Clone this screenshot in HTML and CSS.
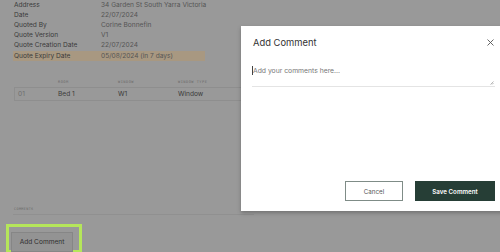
FILE: index.html
```html
<!DOCTYPE html>
<html>
<head>
<meta charset="utf-8">
<link rel="stylesheet" href="styles.css">
</head>
<body>
<div class="page">
  <div class="details">
    <div class="row"><span class="label">Address</span><span class="value">34 Garden St South Yarra Victoria</span></div>
    <div class="row"><span class="label">Date</span><span class="value">22/07/2024</span></div>
    <div class="row"><span class="label">Quoted By</span><span class="value">Corine Bonnefin</span></div>
    <div class="row"><span class="label">Quote Version</span><span class="value">V1</span></div>
    <div class="row"><span class="label">Quote Creation Date</span><span class="value">22/07/2024</span></div>
    <div class="row expiry"><span class="label">Quote Expiry Date</span><span class="value">05/08/2024 (in 7 days)</span></div>
  </div>

  <div class="table">
    <div class="thead">
      <span class="c-idx"></span><span class="c">Room</span><span class="c">Window</span><span class="c">Window Type</span>
    </div>
    <div class="trow">
      <span class="c-idx num">01</span><span class="c">Bed 1</span><span class="c">W1</span><span class="c">Window</span>
    </div>
  </div>

  <div class="comments">
    <div class="comments-label">Comments</div>
    <div class="focus-ring"><button class="add-btn">Add Comment</button></div>
  </div>
</div>

<div class="modal">
  <div class="modal-head">
    <span class="modal-title">Add Comment</span>
    <svg class="close" width="7" height="7" viewBox="0 0 7 7"><path d="M0.5 0.5 L6.5 6.5 M6.5 0.5 L0.5 6.5" stroke="#555" stroke-width="0.9" fill="none"/></svg>
  </div>
  <div class="field">
    <span class="caret"></span><span class="placeholder">Add your comments here...</span>
    <svg class="grip" width="4" height="4" viewBox="0 0 4 4"><path d="M0.5 3.5 L3.5 0.5 M2 3.5 L3.5 2" stroke="#888" stroke-width="0.6"/></svg>
  </div>
  <div class="actions">
    <button class="btn cancel">Cancel</button>
    <button class="btn save">Save Comment</button>
  </div>
</div>
</body>
</html>
```
FILE: styles.css
```css
html, body {
  margin: 0;
  padding: 0;
  width: 500px;
  height: 252px;
  overflow: hidden;
}
body {
  background: #999999;
  font-family: Inter, "Liberation Sans", sans-serif;
  color: #333;
  position: relative;
}
.page {
  padding: 0 0 0 13px;
}
.details {
  display: flex;
  flex-direction: column;
  width: 192px;
}
.row {
  display: flex;
  height: 10px;
  align-items: center;
  font-size: 6.6px;
  padding-left: 1px;
  white-space: nowrap;
}
.row .label {
  width: 87px;
  flex: none;
  color: #3a3a3a;
}
.row .value {
  color: #555;
}
.row.expiry {
  background: #a89881;
  margin-top: 1px;
}
.table {
  margin-top: 15px;
  width: 240px;
  padding-left: 1px;
}
.thead, .trow {
  display: flex;
  align-items: center;
}
.thead {
  height: 11px;
  font-size: 3.6px;
  letter-spacing: 0.5px;
  text-transform: uppercase;
  color: #6a6a6a;
  font-family: "DejaVu Sans Mono", monospace;
}
.trow {
  height: 12px;
  border: 1px solid #8e8e8e;
  font-size: 6.6px;
  color: #3a3a3a;
}
.c-idx {
  width: 40px;
  padding-left: 3px;
}
.thead .c-idx { padding-left: 4px; }
.num { color: #6e6e6e; }
.c {
  width: 60px;
}
.comments {
  margin-top: 106px;
}
.comments-label {
  font-family: "DejaVu Sans Mono", monospace;
  font-size: 3.4px;
  letter-spacing: 0.4px;
  text-transform: uppercase;
  color: #6a6a6a;
  padding-left: 1px;
  height: 7px;
  line-height: 5px;
  width: 240px;
  border-bottom: 1px solid #909090;
}
.focus-ring {
  margin: 9px 0 0 -7px;
  width: 68px;
  height: 22px;
  border: 3px solid #b5e65a;
  padding: 1px 0 0 2px;
}
.add-btn {
  width: 62px;
  height: 20px;
  background: #939393;
  border: 1px solid #868686;
  font-family: Inter, "Liberation Sans", sans-serif;
  font-size: 6.6px;
  color: #2f2f2f;
  padding: 0;
}
.modal {
  position: absolute;
  left: 241px;
  top: 26px;
  width: 243px;
  height: 185px;
  background: #ffffff;
  padding: 0 10px 0 11px;
  box-shadow: 0 2px 4px rgba(0,0,0,0.25);
  display: flex;
  flex-direction: column;
}
.modal-head {
  height: 33px;
  display: flex;
  align-items: center;
  justify-content: space-between;
}
.modal-title {
  font-size: 9.4px;
  color: #333;
  padding-left: 1px;
}
.close {
  margin-right: 1px;
}
.field {
  position: relative;
  height: 28px;
  border-bottom: 1.5px solid #e4e4e4;
  display: flex;
  align-items: flex-start;
  padding-top: 7px;
  box-sizing: border-box;
}
.caret {
  width: 1px;
  height: 9px;
  background: #444;
}
.placeholder {
  font-size: 6.8px;
  color: #777;
  line-height: 9px;
}
.grip {
  position: absolute;
  right: 1px;
  bottom: 1px;
}
.actions {
  margin-top: auto;
  margin-bottom: 10px;
  display: flex;
  justify-content: flex-end;
  gap: 12px;
}
.btn {
  height: 20px;
  font-family: Inter, "Liberation Sans", sans-serif;
  font-size: 6.2px;
  padding: 0;
}
.cancel {
  width: 58px;
  background: #fff;
  border: 1px solid #7f8c87;
  color: #555;
}
.save {
  width: 80px;
  background: #263e36;
  border: 1px solid #263e36;
  color: #fff;
  font-weight: 600;
}
```
